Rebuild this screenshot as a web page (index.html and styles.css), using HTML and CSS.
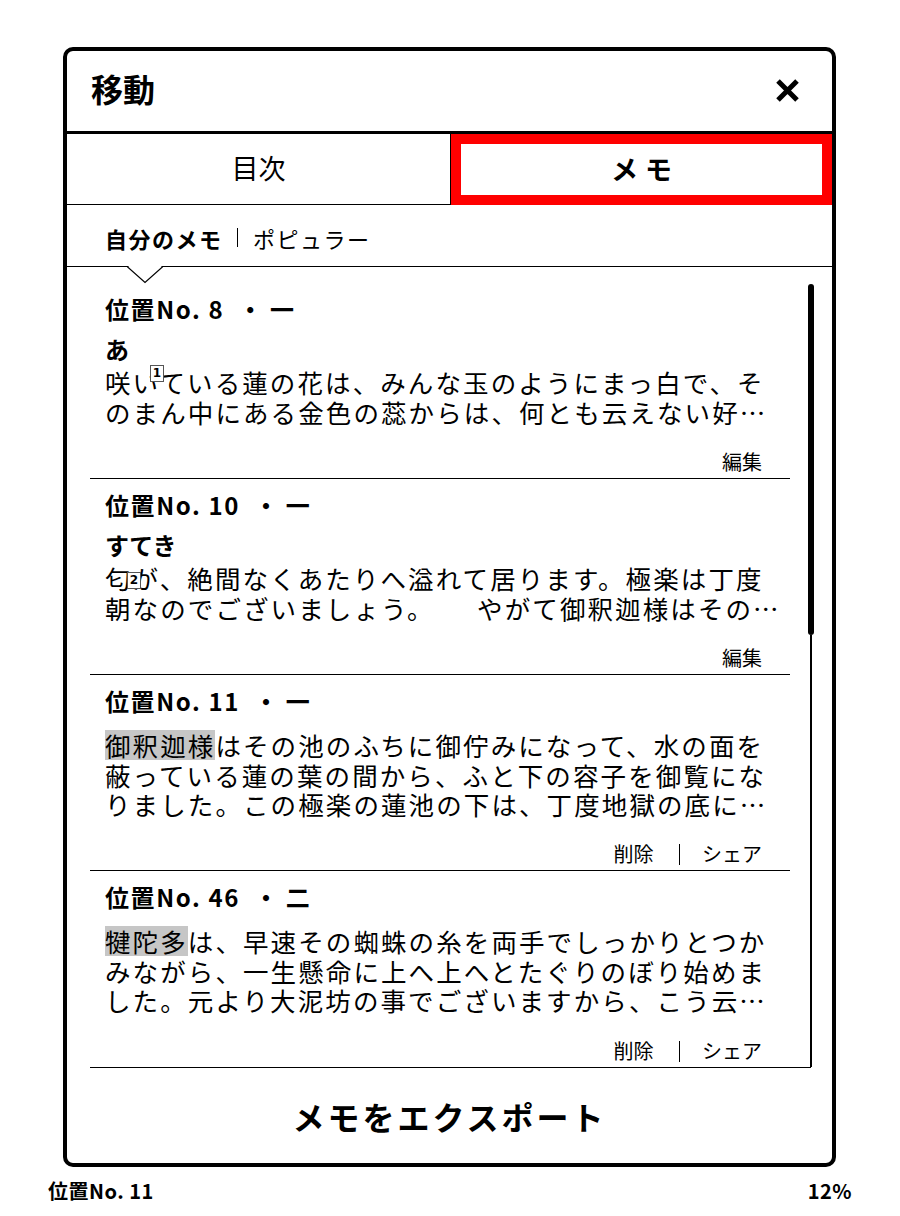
FILE: index.html
```html
<!DOCTYPE html>
<html lang="ja">
<head>
<meta charset="utf-8">
<title>移動</title>
<link rel="stylesheet" href="styles.css">
</head>
<body>
<div class="dialog">
  <div class="header">
    <h1 class="title">移動</h1>
    <span class="close"><svg width="25" height="25" viewBox="0 0 25 25"><path d="M3 3L22 22M22 3L3 22" stroke="#000" stroke-width="5" fill="none"/></svg></span>
  </div>
  <div class="tabs">
    <div class="tab toc">目次</div>
    <div class="tab active">メモ</div>
  </div>
  <div class="subtabs">
    <span class="sub on">自分のメモ</span><span class="vbar"></span><span class="sub">ポピュラー</span>
    <svg class="notch" width="36" height="19" viewBox="0 0 36 19"><polygon points="0,0 36,0 18,17.5" fill="#fff"/><polyline points="0,1.5 18,17.5 36,1.5" fill="none" stroke="#000" stroke-width="1.3"/></svg>
  </div>
  <div class="list">
    <div class="item">
      <div class="head">位置No. 8<span class="dot">・</span>一</div>
      <div class="note">あ</div>
      <div class="text">
        <div class="line">咲いている蓮の花は、みんな玉のようにまっ白で、そ<span class="mk m1">1</span></div>
        <div class="line">のまん中にある金色の蕊からは、何とも云えない好…</div>
      </div>
      <div class="actions"><span class="act">編集</span></div>
    </div>
    <div class="item">
      <div class="head">位置No. 10<span class="dot">・</span>一</div>
      <div class="note">すてき</div>
      <div class="text">
        <div class="line">匂が、絶間なくあたりへ溢れて居ります。極楽は丁度<span class="mk m2">2</span></div>
        <div class="line">朝なのでございましょう。　　やがて御釈迦様はその…</div>
      </div>
      <div class="actions"><span class="act">編集</span></div>
    </div>
    <div class="item">
      <div class="head">位置No. 11<span class="dot">・</span>一</div>
      <div class="text">
        <div class="line"><span class="hl">御釈迦様</span>はその池のふちに御佇みになって、水の面を</div>
        <div class="line">蔽っている蓮の葉の間から、ふと下の容子を御覧にな</div>
        <div class="line">りました。この極楽の蓮池の下は、丁度地獄の底に…</div>
      </div>
      <div class="actions"><span class="act">削除</span><span class="abar"></span><span class="act">シェア</span></div>
    </div>
    <div class="item">
      <div class="head">位置No. 46<span class="dot">・</span>二</div>
      <div class="text">
        <div class="line"><span class="hl">犍陀多</span>は、早速その蜘蛛の糸を両手でしっかりとつか</div>
        <div class="line">みながら、一生懸命に上へ上へとたぐりのぼり始めま</div>
        <div class="line">した。元より大泥坊の事でございますから、こう云…</div>
      </div>
      <div class="actions"><span class="act">削除</span><span class="abar"></span><span class="act">シェア</span></div>
    </div>
    <div class="scroll"><div class="thumb"></div><div class="track"></div></div>
  </div>
  <div class="export">メモをエクスポート</div>
</div>
<div class="status"><span>位置No. 11</span><span>12%</span></div>
</body>
</html>
```
FILE: styles.css
```css
html, body {
  margin: 0;
  padding: 0;
  background: #fff;
}
body {
  width: 900px;
  height: 1216px;
  overflow: hidden;
  font-family: "Noto Sans CJK JP", "Noto Sans", sans-serif;
  color: #000;
}
.dialog {
  box-sizing: border-box;
  margin: 47px 0 0 63px;
  width: 773px;
  height: 1120px;
  border: 4px solid #000;
  border-radius: 10px;
  display: flex;
  flex-direction: column;
}
.header {
  box-sizing: border-box;
  height: 83px;
  border-bottom: 3px solid #000;
  display: flex;
  align-items: center;
  justify-content: space-between;
  padding: 0 32px 6px 24px;
}
.title {
  margin: 0;
  font-size: 32px;
  font-weight: 700;
  line-height: 1;
}
.close {
  display: flex;
  width: 25px;
  height: 25px;
  margin-top: 5px;
}
.tabs {
  display: grid;
  grid-template-columns: 384px 1fr;
  height: 71px;
}
.tab {
  box-sizing: border-box;
  display: flex;
  align-items: center;
  justify-content: center;
  font-size: 27px;
  padding-bottom: 3px;
}
.tab.toc {
  border-right: 1px solid #000;
  border-bottom: 1px solid #000;
}
.tab.active {
  border: 10px solid #ff0000;
  font-weight: 700;
  font-size: 27px;
  letter-spacing: 7px;
  padding-left: 7px;
}
.subtabs {
  position: relative;
  box-sizing: border-box;
  height: 62px;
  border-bottom: 1px solid #000;
  display: flex;
  align-items: center;
  padding: 4px 0 0 38px;
}
.sub {
  font-size: 22px;
  letter-spacing: 1.5px;
  line-height: 30px;
}
.sub.on {
  font-weight: 700;
}
.vbar {
  width: 1.5px;
  height: 19px;
  background: #000;
  margin: 0 15px 0 14px;
}
.notch {
  position: absolute;
  left: 60px;
  top: 60px;
  z-index: 2;
}
.list {
  position: relative;
  margin-left: 23px;
  width: 721px;
  padding-top: 16px;
  border-bottom: 1px solid #000;
}
.item {
  box-sizing: border-box;
  height: 196px;
  margin-right: 21px;
  padding: 9px 28px 4px 15px;
  border-bottom: 1px solid #000;
  display: flex;
  flex-direction: column;
}
.item:nth-child(4) {
  border-bottom: none;
}
.head {
  font-size: 24px;
  font-weight: 700;
  line-height: 34px;
  letter-spacing: 1.6px;
  white-space: nowrap;
}
.dot {
  display: inline-block;
  margin: 0 6px 0 14px;
}
.note {
  font-size: 24px;
  font-weight: 700;
  line-height: 29px;
  margin-top: 8px;
}
.text {
  font-size: 25.5px;
  line-height: 29.5px;
  letter-spacing: 2.1px;
}
.note + .text {
  margin-top: 4px;
}
.head + .text {
  margin-top: 12px;
}
.line {
  position: relative;
  white-space: nowrap;
}
.hl {
  display: inline-block;
  background: #c6c6c6;
  line-height: 29.5px;
}
.mk {
  position: absolute;
  box-sizing: border-box;
  width: 14px;
  height: 17px;
  border: 1px solid #555;
  background: #fff;
  font-family: "DejaVu Sans", sans-serif;
  font-size: 12px;
  font-weight: 700;
  line-height: 15px;
  letter-spacing: 0;
  text-align: center;
}
.m1 {
  left: 45px;
  top: -2px;
}
.m2 {
  left: 22px;
  top: 9px;
}
.actions {
  margin-top: auto;
  display: flex;
  justify-content: flex-end;
  align-items: center;
  height: 24px;
}
.act {
  font-size: 20px;
  line-height: 24px;
}
.abar {
  width: 1.5px;
  height: 21px;
  background: #000;
  margin: 0 22px 0 25px;
}
.scroll {
  position: absolute;
  left: 718px;
  top: 17px;
  bottom: 0;
  width: 6px;
  display: flex;
  flex-direction: column;
}
.thumb {
  height: 351px;
  background: #000;
  border-radius: 3px;
}
.track {
  flex: 1;
  width: 2px;
  margin: 0 auto;
  background: #000;
}
.export {
  flex: 1;
  display: flex;
  align-items: center;
  justify-content: center;
  font-size: 32px;
  font-weight: 700;
  letter-spacing: 3px;
}
.status {
  display: flex;
  justify-content: space-between;
  padding: 12px 48px 0 48px;
  font-size: 20px;
  font-weight: 700;
  line-height: 24px;
  letter-spacing: 0.5px;
}
```
